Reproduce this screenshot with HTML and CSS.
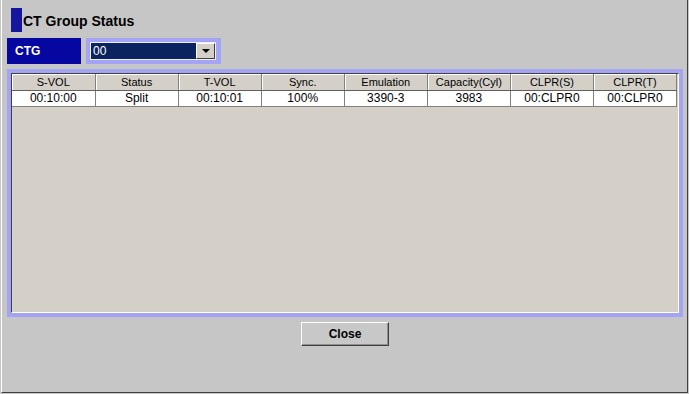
FILE: index.html
```html
<!doctype html>
<html lang="en">

<head>
    <meta charset="UTF-8">
    <title>CT Group Status</title>
    <link rel="stylesheet" href="styles.css">
</head>

<body>
    <div class="window">
        <!-- title -->
        <div class="title-row">
            <span class="title-bar"></span>
            <span class="title-text">CT Group Status</span>
        </div>

        <!-- CTG selector -->
        <div class="ctg-row">
            <div class="ctg-label">CTG</div>
            <div class="combo-frame">
                <div class="combo">
                    <span class="combo-value">00</span>
                    <span class="combo-arrow"><span class="tri"></span></span>
                </div>
            </div>
        </div>

        <!-- table panel -->
        <div class="panel">
            <div class="panel-inner">
                <table class="grid">
                    <thead>
                        <tr>
                            <th>S-VOL</th>
                            <th>Status</th>
                            <th>T-VOL</th>
                            <th>Sync.</th>
                            <th>Emulation</th>
                            <th>Capacity(Cyl)</th>
                            <th>CLPR(S)</th>
                            <th>CLPR(T)</th>
                        </tr>
                    </thead>
                    <tbody>
                        <tr>
                            <td>00:10:00</td>
                            <td>Split</td>
                            <td>00:10:01</td>
                            <td>100%</td>
                            <td>3390-3</td>
                            <td>3983</td>
                            <td>00:CLPR0</td>
                            <td>00:CLPR0</td>
                        </tr>
                    </tbody>
                </table>
            </div>
        </div>

        <!-- buttons -->
        <div class="button-row">
            <button class="btn">Close</button>
        </div>
    </div>
</body>

</html>
```

FILE: styles.css
```css
body {
    margin: 0;
    padding: 0;
    background-color: #c6c6c6;
    font-family: 'Liberation Sans', Arial, sans-serif;
    overflow: hidden;
}

.window {
    box-sizing: border-box;
    width: 687px;
    height: 393px;
    margin-left: 1px;
    padding-top: 8px;
    background-color: #c6c6c6;
    border-left: 1px solid #ffffff;
    border-right: 1px solid #404040;
    border-bottom: 1px solid #404040;
}

/* title */
.title-row {
    display: flex;
    align-items: flex-end;
    height: 24px;
    margin-left: 9px;
}

.title-bar {
    width: 11px;
    height: 24px;
    background-color: #16169c;
}

.title-text {
    margin-left: 1px;
    margin-bottom: 3px;
    font-size: 14px;
    line-height: 16px;
    font-weight: bold;
    color: #000000;
}

/* CTG row */
.ctg-row {
    display: flex;
    gap: 5px;
    margin-top: 6px;
    margin-left: 5px;
}

.ctg-label {
    box-sizing: border-box;
    width: 74px;
    height: 26px;
    padding-left: 8px;
    background-color: #0606a0;
    color: #ffffff;
    font-size: 12px;
    font-weight: bold;
    line-height: 26px;
}

.combo-frame {
    box-sizing: border-box;
    width: 135px;
    height: 26px;
    padding: 4px 5px 4px 4px;
    background-color: #a4a4f4;
}

.combo {
    box-sizing: border-box;
    display: flex;
    height: 18px;
    border: 1px solid #eeeeff;
    background-color: #0b2361;
}

.combo-value {
    flex: 1;
    padding-left: 2px;
    color: #ffffff;
    font-size: 12px;
    line-height: 16px;
}

.combo-arrow {
    box-sizing: border-box;
    display: flex;
    align-items: center;
    justify-content: center;
    width: 19px;
    height: 16px;
    background-color: #d4d0c8;
    border-top: 1px solid #ffffff;
    border-left: 1px solid #ffffff;
    border-right: 1px solid #404040;
    border-bottom: 1px solid #404040;
}

.tri {
    width: 0;
    height: 0;
    border-left: 4px solid transparent;
    border-right: 4px solid transparent;
    border-top: 4px solid #000000;
}

/* table panel */
.panel {
    box-sizing: border-box;
    width: 676px;
    height: 248px;
    margin-top: 5px;
    margin-left: 5px;
    border: 4px solid #a4a4f4;
}

.panel-inner {
    box-sizing: border-box;
    height: 100%;
    background-color: #d4d0c8;
    border-top: 1px solid #404040;
    border-left: 1px solid #404040;
    border-right: 1px solid #ffffff;
    border-bottom: 1px solid #ffffff;
}

.grid {
    width: 665px;
    border-collapse: collapse;
    table-layout: fixed;
}

.grid th {
    height: 16px;
    padding: 0;
    background-color: #d4d0c8;
    border-right: 1px solid #808080;
    border-bottom: 1px solid #606060;
    box-shadow: inset 1px 1px 0 #ffffff;
    font-size: 11px;
    font-weight: normal;
    color: #000000;
    text-align: center;
}

.grid td {
    height: 15px;
    padding: 0;
    background-color: #ffffff;
    border-right: 1px solid #808080;
    border-bottom: 1px solid #808080;
    font-size: 12px;
    line-height: 15px;
    color: #000000;
    text-align: center;
}

/* buttons */
.button-row {
    display: flex;
    justify-content: center;
    width: 676px;
    margin-top: 5px;
    margin-left: 5px;
}

.btn {
    box-sizing: border-box;
    width: 88px;
    height: 24px;
    padding: 0;
    background-color: #c8c8c8;
    border-top: 1px solid #ffffff;
    border-left: 1px solid #ffffff;
    border-right: 1px solid #404040;
    border-bottom: 1px solid #404040;
    box-shadow: inset -1px -1px 0 #909090;
    font-family: 'Liberation Sans', Arial, sans-serif;
    font-size: 12px;
    font-weight: bold;
    color: #000000;
}
```
